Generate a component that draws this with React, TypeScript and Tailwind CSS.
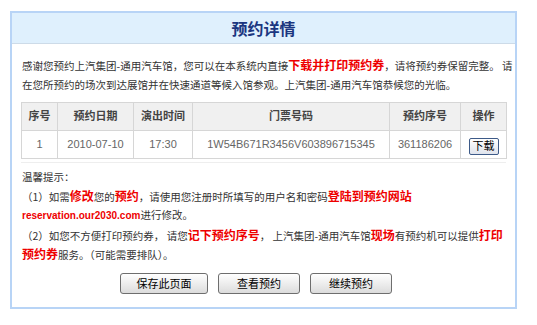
import React from 'react'

const cols = [
  { label: '序号', w: 'w-[36px]', v: '1' },
  { label: '预约日期', w: 'w-[76px]', v: '2010-07-10' },
  { label: '演出时间', w: 'w-[59px]', v: '17:30' },
  { label: '门票号码', w: 'w-[197px]', v: '1W54B671R3456V603896715345' },
  { label: '预约序号', w: 'w-[71px]', v: '361186206' },
]

const Red = ({ children }: { children: React.ReactNode }) => (
  <span className="text-[12px] font-bold text-[#ee0000]">{children}</span>
)

const App = () => {
  return (
    <div className="w-[537px] h-[325px] bg-white pt-[11px] pl-[10px] font-['Noto_Sans_CJK_SC',sans-serif]">
      <div className="w-[507px] h-[298px] border-2 border-[#b8d4f6] bg-white">
        <div className="h-[31px] bg-[#dff0fd] border-b border-[#cddbe8] flex items-center justify-center">
          <span className="text-[16px] font-bold text-[#1b3680] leading-none">预约详情</span>
        </div>

        <div className="px-[9px] pt-[11px]">
          <p className="text-[10.5px] leading-[19px] text-[#333] whitespace-nowrap pl-[1px]">
            感谢您预约上汽集团-通用汽车馆，您可以在本系统内直接<Red>下载并打印预约券</Red>，请将预约券保留完整。 请
            <br />
            在您所预约的场次到达展馆并在快速通道等候入馆参观。上汽集团-通用汽车馆恭候您的光临。
          </p>

          <table className="mt-[8px] w-[486px] border-collapse font-['Liberation_Sans','Noto_Sans_CJK_SC',sans-serif]">
            <thead>
              <tr className="h-[28px] bg-[#f0f0f0]">
                {cols.map((c) => (
                  <th key={c.label} className={`${c.w} border border-[#d6d6d6] text-[11px] font-bold text-[#444]`}>
                    {c.label}
                  </th>
                ))}
                <th className="border border-[#d6d6d6] text-[11px] font-bold text-[#444]">操作</th>
              </tr>
            </thead>
            <tbody>
              <tr className="h-[28px]">
                {cols.map((c) => (
                  <td key={c.label} className="border border-[#d6d6d6] text-center text-[11px] text-[#666]">
                    {c.v}
                  </td>
                ))}
                <td className="border border-[#d6d6d6] text-center">
                  <button className="w-[30px] h-[17px] border border-[#3d5a88] rounded-[2px] bg-gradient-to-b from-white to-[#dfe3ec] text-[11px] leading-none text-black">
                    下载
                  </button>
                </td>
              </tr>
            </tbody>
          </table>

          <div className="mt-[3px] border-t border-[#eeeeee] pt-[5px] pl-[1px] text-[10.5px] leading-[18.5px] text-[#333] whitespace-nowrap">
            <div>温馨提示：</div>
            <div>
              （1）如需<Red>修改</Red>您的<Red>预约</Red>，请使用您注册时所填写的用户名和密码<Red>登陆到预约网站</Red>
            </div>
            <div>
              <span className="font-['Liberation_Sans',sans-serif] text-[10px] font-bold text-[#ee0000]">reservation.our2030.com</span>进行修改。
            </div>
            <div>
              （2）如您不方便打印预约券， 请您<Red>记下预约序号</Red>， 上汽集团-通用汽车馆<Red>现场</Red>有预约机可以提供<Red>打印</Red>
            </div>
            <div>
              <Red>预约券</Red>服务。（可能需要排队）。
            </div>
          </div>
        </div>

        <div className="mt-[8px] flex justify-center gap-[10px] pr-[15px]">
          <button className="w-[88px] h-[21px] border border-[#6e6e6e] rounded-[3px] bg-gradient-to-b from-white to-[#dcdcdc] text-[11px] leading-none text-black">
            保存此页面
          </button>
          <button className="w-[82px] h-[21px] border border-[#6e6e6e] rounded-[3px] bg-gradient-to-b from-white to-[#dcdcdc] text-[11px] leading-none text-black">
            查看预约
          </button>
          <button className="w-[82px] h-[21px] border border-[#6e6e6e] rounded-[3px] bg-gradient-to-b from-white to-[#dcdcdc] text-[11px] leading-none text-black">
            继续预约
          </button>
        </div>
      </div>
    </div>
  )
}

export default App
